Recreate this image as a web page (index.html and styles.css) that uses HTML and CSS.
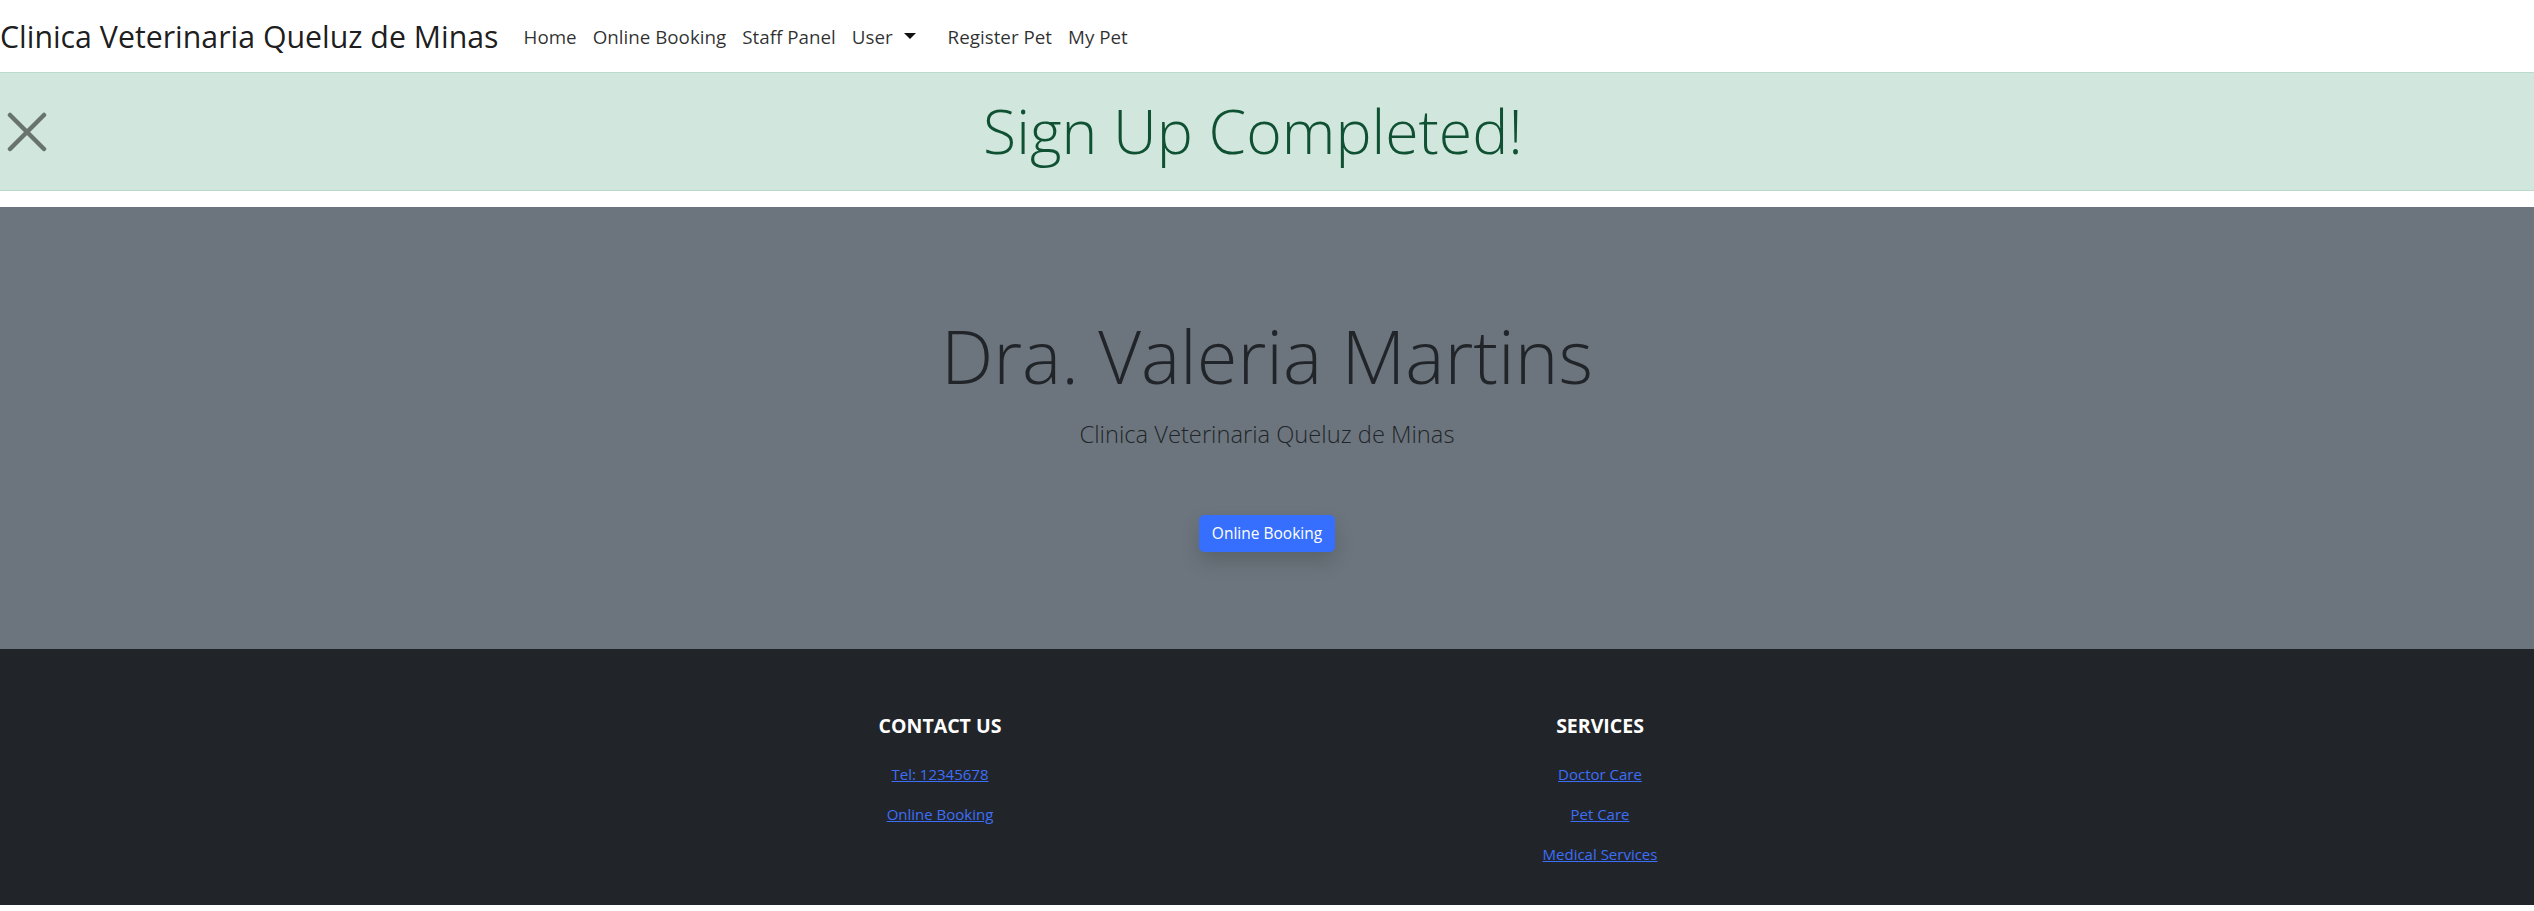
FILE: index.html
```html
<!DOCTYPE html>
<html lang="en">
<head>
<meta charset="utf-8">
<title>Clinica Veterinaria Queluz de Minas</title>
<link rel="stylesheet" href="styles.css">
</head>
<body>
<nav class="navbar">
  <a class="brand" href="#">Clinica Veterinaria Queluz de Minas</a>
  <ul class="nav">
    <li><a class="nav-link" href="#">Home</a></li>
    <li><a class="nav-link" href="#">Online Booking</a></li>
    <li><a class="nav-link" href="#">Staff Panel</a></li>
    <li><a class="nav-link dropdown" href="#">User<span class="caret"></span></a></li>
  </ul>
  <ul class="nav nav-second">
    <li><a class="nav-link" href="#">Register Pet</a></li>
    <li><a class="nav-link" href="#">My Pet</a></li>
  </ul>
</nav>

<div class="alert">
  <button class="close" aria-label="Close">
    <svg viewBox="0 0 40 40" width="40" height="40"><path d="M3 3 L37 37 M37 3 L3 37" stroke="currentColor" stroke-width="4.5" stroke-linecap="round" fill="none"/></svg>
  </button>
  <h2 class="alert-text">Sign Up Completed!</h2>
</div>

<section class="hero">
  <h1 class="hero-title">Dra. Valeria Martins</h1>
  <p class="hero-lead">Clinica Veterinaria Queluz de Minas</p>
  <a class="btn" href="#">Online Booking</a>
</section>

<footer class="footer">
  <div class="footer-grid">
    <div class="footer-col">
      <h6 class="footer-title">CONTACT US</h6>
      <a class="footer-link" href="#">Tel: 12345678</a>
      <a class="footer-link" href="#">Online Booking</a>
    </div>
    <div class="footer-col">
      <h6 class="footer-title">SERVICES</h6>
      <a class="footer-link" href="#">Doctor Care</a>
      <a class="footer-link" href="#">Pet Care</a>
      <a class="footer-link" href="#">Medical Services</a>
    </div>
  </div>
</footer>
</body>
</html>
```
FILE: styles.css
```css
* { box-sizing: border-box; }
html, body { margin: 0; padding: 0; background: #fff; }
body { font-family: "Open Sans", "Noto Sans", sans-serif; color: #212529; }

.navbar {
  display: flex;
  align-items: center;
  height: 72px;
  padding: 2px 0 0;
}
.brand {
  font-size: 30.3px;
  line-height: 70px;
  color: rgba(0,0,0,.9);
  text-decoration: none;
  margin-right: 17px;
  white-space: nowrap;
}
.nav {
  display: flex;
  list-style: none;
  margin: 0;
  padding: 0;
}
.nav-second { margin-left: 16px; }
.nav-link {
  display: flex;
  align-items: center;
  font-size: 18.8px;
  line-height: 70px;
  padding: 0 8px;
  color: rgba(0,0,0,.82);
  text-decoration: none;
  white-space: nowrap;
}
.caret {
  display: inline-block;
  margin-left: 11px;
  border-top: 6px solid #111;
  border-left: 6px solid transparent;
  border-right: 6px solid transparent;
  margin-top: -2px;
}

.alert {
  position: relative;
  background: #d1e7dd;
  border-top: 1px solid #badbcc;
  border-bottom: 1px solid #badbcc;
  margin-bottom: 16px;
}
.close {
  position: absolute;
  left: 6px;
  top: 38px;
  width: 41px;
  height: 41px;
  padding: 0;
  border: 0;
  background: transparent;
  color: rgba(0,0,0,.5);
  display: flex;
  align-items: center;
  justify-content: center;
}
.close svg { display: block; }
.alert-text {
  margin: 0;
  padding: 23px 28px 25px 0;
  text-align: center;
  font-size: 60.7px;
  line-height: 69px;
  font-weight: 300;
  color: #0f5132;
}

.hero {
  background: #6c757d;
  text-align: center;
  padding: 107px 0 97px;
  display: flex;
  flex-direction: column;
  align-items: center;
}
.hero-title {
  margin: 0;
  font-size: 74px;
  line-height: 84px;
  font-weight: 300;
  color: #212529;
}
.hero-lead {
  margin: 18.5px 0 0;
  font-size: 23.7px;
  line-height: 34px;
  font-weight: 300;
  color: #212529;
}
.btn {
  margin-top: 64px;
  display: inline-block;
  background: #366ffd;
  border: 1px solid #366ffd;
  color: #fff;
  font-size: 15.5px;
  line-height: 21px;
  padding: 7px 12px;
  border-radius: 5px;
  text-decoration: none;
  box-shadow: 0 10px 20px rgba(0,0,0,.15);
}

.footer {
  background: #212529;
  padding: 65px 0 31px;
}
.footer-grid {
  display: grid;
  grid-template-columns: 660px 660px;
  justify-content: center;
  padding-left: 6px;
}
.footer-col {
  display: flex;
  flex-direction: column;
  align-items: center;
}
.footer-title {
  margin: 0 0 16px;
  color: #fff;
  font-size: 19.5px;
  line-height: 24px;
  font-weight: 700;
}
.footer-link {
  font-size: 15px;
  line-height: 40px;
  color: #3d6ef8;
  text-decoration: underline;
}
```
